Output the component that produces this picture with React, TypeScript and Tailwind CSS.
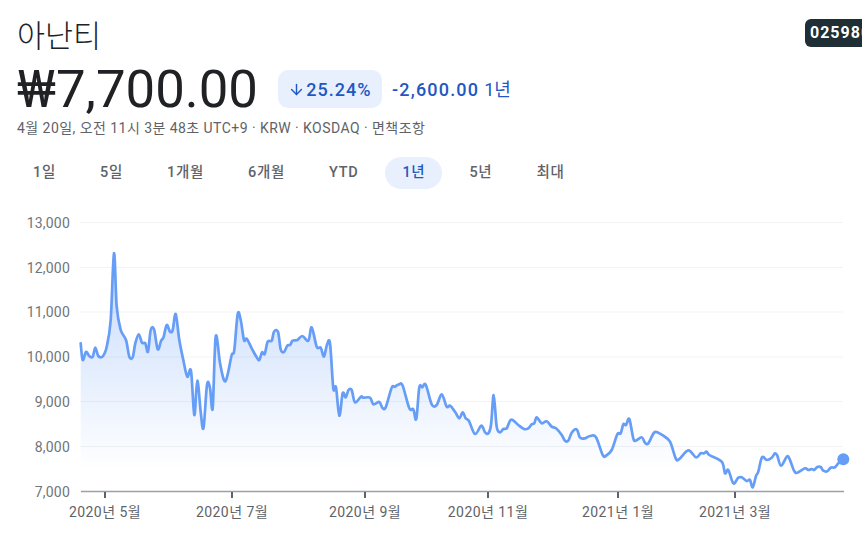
import { ArrowDown } from 'lucide-react'

const tabs = ['1일', '5일', '1개월', '6개월', 'YTD', '1년', '5년', '최대']

const yLabels = [
  { label: '13,000', y: 222.5 },
  { label: '12,000', y: 267.5 },
  { label: '11,000', y: 312 },
  { label: '10,000', y: 357 },
  { label: '9,000', y: 401.5 },
  { label: '8,000', y: 446.5 },
  { label: '7,000', y: 491.5 },
]

const xLabels = [
  { label: '2020년 5월', x: 105 },
  { label: '2020년 7월', x: 232 },
  { label: '2020년 9월', x: 365 },
  { label: '2020년 11월', x: 488 },
  { label: '2021년 1월', x: 618 },
  { label: '2021년 3월', x: 735 },
]

// page coordinates read off the screenshot
const points: [number, number][] = [
  [80.7, 343.3], [82.7, 360], [86, 352], [89.3, 356], [92.7, 356.7], [95.3, 347.7], [98.3, 356], [102.7, 356.3],
  [106.7, 346.7], [110.7, 320], [114, 253.3], [116.7, 306.7], [120.7, 330], [126, 340], [129.3, 356.7], [132.7, 357.3],
  [135.3, 343.3], [138.7, 334.3], [142, 342.7], [145.3, 343.3], [148, 351.7], [150.7, 330], [154, 329.3], [157.7, 349.3],
  [161, 341], [163.7, 336.7], [166.7, 325], [170, 331.7], [172.7, 330], [175.7, 314], [179.3, 340], [183.3, 360],
  [187.3, 376.7], [191, 371], [194.3, 415], [197.3, 380.7], [200.7, 412], [203.5, 428], [207, 385], [210, 388],
  [212.7, 408], [215.7, 336.7], [220, 363], [223.3, 378.3], [225.7, 381], [228.3, 371.7], [231.7, 355], [234.3, 350],
  [237.7, 314], [240.7, 320], [244, 340], [246.7, 338.7], [251.7, 348.3], [256.7, 357.3], [259.3, 360], [262, 352.3],
  [264.7, 354], [267.7, 341.7], [271.7, 340.7], [274, 331.7], [278, 331.7], [280.7, 349.3], [284, 352], [287.3, 345.7],
  [290, 345], [292.7, 340.7], [297.3, 340], [302.3, 336], [308.3, 340.7], [311.7, 327.3], [316.7, 346.7], [320.7, 347.7],
  [324, 356.7], [326.7, 345.7], [330, 343.3], [333.3, 388.3], [336, 387.3], [339.3, 415.7], [342.7, 393.3], [345.7, 397.3],
  [348.5, 390], [351.7, 390], [355, 402.3], [361, 396.7], [363.3, 397.7], [370, 397.7], [373.3, 404.3], [379.3, 402],
  [382.3, 407.7], [385.7, 407.3], [391.7, 387.7], [395, 386.7], [399, 384.3], [402.7, 385.7], [409.3, 408.3], [413.3, 409.3],
  [416.3, 419], [419.3, 387.3], [422.3, 387.3], [425.7, 384.7], [431.7, 404.3], [436.7, 405], [441.7, 394.3], [446.7, 406.7],
  [450, 405.7], [455, 411.7], [459.3, 418.3], [462.7, 412.3], [465.7, 418.3], [469, 421], [475, 434], [481.3, 425.7],
  [485, 432.3], [488.3, 433.3], [491, 425], [493.7, 395], [496.7, 426.7], [500, 432.3], [503.3, 429], [506.7, 428.3],
  [510, 420.7], [512.7, 420], [518.3, 425], [524, 429], [528.3, 428.3], [531.7, 424.3], [534.3, 423.3], [536.7, 417.3],
  [541.7, 423.3], [546.7, 421.3], [551.7, 426.7], [556, 428.3], [561.7, 435], [565, 440.7], [568.3, 440.7], [571.7, 432.7],
  [576.7, 429.3], [580, 437.7], [585, 438.3], [590, 436], [596, 437.3], [602.7, 455], [606, 455.7], [611.7, 450],
  [617.3, 434.3], [620.7, 433.3], [623.3, 424.3], [626, 425], [629.3, 419], [633.3, 438.3], [635.7, 440.7], [641.7, 437.3],
  [645, 442.7], [648.3, 443.3], [654, 432.7], [658.3, 432.7], [663.3, 435.7], [670, 441.7], [675.7, 458.3], [679, 459.3],
  [688.3, 450.3], [696, 457.3], [700.7, 453.3], [704, 453.3], [706.7, 451.7], [709.3, 455], [721.7, 461.7], [725, 473.3],
  [728.3, 470], [733.3, 483.3], [738.3, 477.7], [741.7, 477.3], [746.7, 481], [750, 480], [752.7, 487.3], [756, 476],
  [758.3, 471.7], [762, 457.3], [766.7, 460], [771.7, 457.7], [775, 453.3], [777.3, 455.7], [781, 465.7], [786.7, 456.7],
  [789.3, 458.3], [794, 470.7], [797.3, 472.7], [805, 468.3], [808.3, 470], [811.7, 469], [814, 470], [817.3, 467],
  [820.7, 467], [823.3, 470.7], [827.3, 471.3], [830.7, 467.7], [835, 467.3], [838.3, 463.3], [843.3, 459.3],
]

// catmull-rom through the points so the line stays soft
function smoothPath(pts: [number, number][]) {
  let d = `M${pts[0][0]} ${pts[0][1]}`
  for (let i = 0; i < pts.length - 1; i++) {
    const p0 = pts[Math.max(i - 1, 0)]
    const p1 = pts[i]
    const p2 = pts[i + 1]
    const p3 = pts[Math.min(i + 2, pts.length - 1)]
    const c1x = p1[0] + (p2[0] - p0[0]) / 6
    const c1y = p1[1] + (p2[1] - p0[1]) / 6
    const c2x = p2[0] - (p3[0] - p1[0]) / 6
    const c2y = p2[1] - (p3[1] - p1[1]) / 6
    d += ` C${c1x.toFixed(1)} ${c1y.toFixed(1)} ${c2x.toFixed(1)} ${c2y.toFixed(1)} ${p2[0]} ${p2[1]}`
  }
  return d
}

function PriceChart() {
  const line = smoothPath(points)
  return (
    <svg width="862" height="333" viewBox="0 200 862 333" className="block">
      <defs>
        <linearGradient id="area" gradientUnits="userSpaceOnUse" x1="0" y1="253" x2="0" y2="470">
          <stop offset="0" stopColor="#4285f4" stopOpacity="0.31" />
          <stop offset="1" stopColor="#4285f4" stopOpacity="0" />
        </linearGradient>
      </defs>
      {yLabels.map((t) => (
        <g key={t.label}>
          {t.y < 490 && <line x1="80" x2="843" y1={t.y} y2={t.y} stroke="#f1f3f4" strokeWidth="1" />}
          <text x="70" y={t.y + 5} textAnchor="end" fill="#70757a" fontSize="14" letterSpacing="0.2">
            {t.label}
          </text>
        </g>
      ))}
      <path d={`${line} L843.3 491 L80.7 491 Z`} fill="url(#area)" />
      <line x1="81" x2="844" y1="491.5" y2="491.5" stroke="#9aa0a6" strokeWidth="1.5" />
      {xLabels.map((t) => (
        <g key={t.label}>
          <line x1={t.x} x2={t.x} y1="492" y2="498" stroke="#5f6368" strokeWidth="2" />
          <text x={t.x} y="517" textAnchor="middle" fill="#5f6368" fontSize="14" letterSpacing="0.45">
            {t.label}
          </text>
        </g>
      ))}
      <path d={line} fill="none" stroke="#669df6" strokeWidth="2.7" strokeLinejoin="round" strokeLinecap="round" />
      <circle cx="843.3" cy="459.3" r="6" fill="#669df6" />
    </svg>
  )
}

export default function App() {
  return (
    <div className="h-[533px] w-[862px] overflow-hidden bg-white font-['Roboto','Noto_Sans_CJK_KR',sans-serif]">
      <div className="flex h-[58px] items-start pl-[17px] pt-[17px]">
        <h1 className="text-[30.5px] leading-[40px] font-light text-[#202124]">아난티</h1>
        <span className="mt-[2px] ml-auto mr-[-20px] flex h-[28px] w-[77px] shrink-0 items-center rounded-md bg-[#202f36] pl-[5px] text-[16px] font-bold tracking-[1px] text-white">
          025980
        </span>
      </div>

      <div className="mt-[2px] flex h-[58px] items-center pl-[17px]">
        <span className="text-[52.7px] leading-[58px] text-[#202124]">₩7,700.00</span>
        <span className="ml-[20px] flex h-[38px] w-[104px] items-center justify-center gap-[1px] rounded-[10px] bg-[#e8f0fe] text-[18px] font-medium tracking-[1px] text-[#1f57c3]">
          <ArrowDown className="h-[17px] w-[17px]" strokeWidth={2} />
          25.24%
        </span>
        <span className="ml-[10px] text-[18px] font-medium tracking-[1.2px] text-[#1f57c3]">-2,600.00</span>
        <span className="ml-[5px] text-[18px] text-[#1f57c3]">1년</span>
      </div>

      <div className="mt-[1px] pl-[17px] text-[14px] leading-[18px] tracking-[0.45px] text-[#5f6368]">
        4월 20일, 오전 11시 3분 48초 UTC+9 · KRW · KOSDAQ · 면책조항
      </div>

      <div className="mt-[20px] flex gap-[10px] pl-[16px]">
        {tabs.map((tab) => (
          <span
            key={tab}
            className={
              tab === '1년'
                ? 'flex h-8 items-center rounded-full bg-[#e8f0fe] px-[17px] text-[14.5px] font-medium tracking-[0.7px] text-[#1f57c3]'
                : 'flex h-8 items-center rounded-full px-[17px] text-[14.5px] font-medium tracking-[0.7px] text-[#5f6368]'
            }
          >
            {tab}
          </span>
        ))}
      </div>

      <div className="mt-[11px]">
        <PriceChart />
      </div>
    </div>
  )
}
